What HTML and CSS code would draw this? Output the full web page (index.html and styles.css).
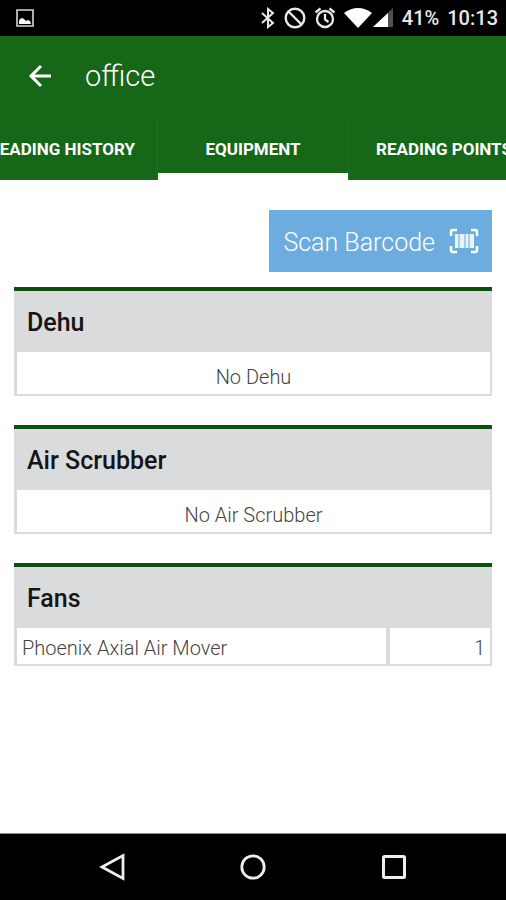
FILE: index.html
```html
<!DOCTYPE html>
<html lang="en">
<head>
<meta charset="utf-8">
<meta name="viewport" content="width=device-width, initial-scale=1">
<title>office</title>
<link rel="stylesheet" href="styles.css">
</head>
<body>
<div class="status">
  <svg class="shot" width="18" height="18" viewBox="0 0 18 18" aria-hidden="true"><path d="M1 1h16v16H1z" fill="none" stroke="#d8d8d8" stroke-width="1.6"/><path d="M3 15v-3l1-2 2-1 2 1 2 2 2-1 2 1 1 3z" fill="#fff"/></svg>
  <div class="indicators">
    <svg width="16" height="22" viewBox="0 0 16 22" aria-hidden="true"><path d="M2 6l11 10-5 4V2l5 4L2 16" fill="none" stroke="#e8e8e8" stroke-width="2"/></svg>
    <svg width="22" height="22" viewBox="0 0 22 22" aria-hidden="true"><circle cx="11" cy="11" r="9.300" fill="none" stroke="#e8e8e8" stroke-width="2.400"/><path d="M4.500 4.500l13 13" stroke="#e8e8e8" stroke-width="2.400"/></svg>
    <svg width="22" height="22" viewBox="0 0 22 22" aria-hidden="true"><g fill="none" stroke="#e8e8e8" stroke-width="2.300"><circle cx="11" cy="12" r="8"/><path d="M1.500 5.500l5-4M20.500 5.500l-5-4M11 7v5.500l3.500 2.500"/></g></svg>
    <svg width="28" height="22" viewBox="0 0 28 22" aria-hidden="true"><path d="M0 6Q14-4 28 6L14 21z" fill="#fff"/></svg>
    <svg class="signal" width="21" height="22" viewBox="0 0 21 22" aria-hidden="true"><path d="M0 20L20 1v19z" fill="#505050"/><path d="M0 20L15 6v14z" fill="#fff"/></svg>
    <span class="battery">41%</span>
    <span>10:13</span>
  </div>
</div>
<header class="appbar">
  <div class="titlebar">
    <button class="back" type="button" aria-label="Back"><svg width="24" height="24" viewBox="0 0 24 24"><path d="M23 12H3M13 2L3 12l10 10" fill="none" stroke="#fff" stroke-width="3"/></svg></button>
    <h1>office</h1>
  </div>
  <nav class="tabs">
    <a href="#history">READING HISTORY</a>
    <a href="#equipment" class="active" aria-current="page">EQUIPMENT</a>
    <a href="#points">READING POINTS</a>
  </nav>
</header>
<main id="equipment">
  <button class="scan" type="button"><span>Scan Barcode</span>
    <svg width="30" height="26" viewBox="0 0 30 26" aria-hidden="true"><path d="M8 2H4Q2 2 2 4v4M22 2h4q2 0 2 2v4M8 24H4q-2 0-2-2v-4M22 24h4q2 0 2-2v-4" fill="none" stroke="#fff" stroke-width="2.500"/><path d="M6 6h3v14H6zM11 6h4v14h-4zM17 6h2v14h-2zM21 6h4v14h-4z" fill="#fff" opacity=".85"/><path d="M9 6h2v14H9zM15 6h2v14h-2zM19 6h2v14h-2z" fill="#fff" opacity=".4"/></svg>
  </button>
  <section>
    <table>
      <thead><tr><th>Dehu</th></tr></thead>
      <tbody><tr><td class="empty">No Dehu</td></tr></tbody>
    </table>
  </section>
  <section>
    <table>
      <thead><tr><th>Air Scrubber</th></tr></thead>
      <tbody><tr><td class="empty">No Air Scrubber</td></tr></tbody>
    </table>
  </section>
  <section>
    <table>
      <thead><tr><th colspan="2">Fans</th></tr></thead>
      <tbody><tr><td>Phoenix Axial Air Mover</td><td class="count">1</td></tr></tbody>
    </table>
  </section>
</main>
<div class="navbar">
  <button type="button" aria-label="Back"><svg width="28" height="28" viewBox="0 0 28 28"><path d="M25 2.500v23L4 14z" fill="none" stroke="#eee" stroke-width="2.800"/></svg></button>
  <button type="button" aria-label="Home"><svg width="28" height="28" viewBox="0 0 28 28"><circle cx="14" cy="14" r="11.200" fill="none" stroke="#eee" stroke-width="2.800"/></svg></button>
  <button type="button" aria-label="Recent apps"><svg width="28" height="28" viewBox="0 0 28 28"><rect x="3.500" y="3.500" width="21" height="21" rx="1" fill="none" stroke="#eee" stroke-width="3"/></svg></button>
</div>
</body>
</html>
```
FILE: styles.css
```css
* {
  box-sizing: border-box;
}

body {
  margin: 0;
  min-height: 100vh;
  display: flex;
  flex-direction: column;
  background: #fff;
  color: #444;
  font-family: Roboto, "Liberation Sans", sans-serif;
}

button {
  border: 0;
  padding: 0;
  background: none;
  font: inherit;
}

svg {
  display: block;
  flex: none;
}

.status {
  height: 36px;
  padding: 0 8px 0 16px;
  display: flex;
  align-items: center;
  justify-content: space-between;
  background: #000;
  color: #e8e8e8;
  font-size: 20px;
  font-weight: 500;
}

.indicators {
  display: flex;
  align-items: center;
  gap: 8px;
}

.indicators .signal {
  margin-left: -7px;
}

.appbar {
  background: #166818;
  color: #fff;
}

.titlebar {
  height: 82px;
  padding: 0 28px 3px;
  display: flex;
  align-items: center;
  gap: 33px;
}

h1 {
  margin: 0;
  font-size: 29px;
  font-weight: 300;
}

.tabs {
  display: flex;
  justify-content: center;
  gap: 1px;
  overflow: hidden;
}

.tabs a {
  flex: 0 0 190px;
  height: 62px;
  border-bottom: 0 solid #fff;
  color: #fff;
  font-size: 17px;
  font-weight: 700;
  line-height: 62px;
  text-align: center;
  text-decoration: none;
  white-space: nowrap;
}

.tabs .active {
  border-bottom-width: 7px;
  box-shadow: -1px 0 #1f6f20, 1px 0 #1f6f20;
}

main {
  flex: 1;
  padding: 30px 14px;
  display: flex;
  flex-direction: column;
}

.scan {
  align-self: flex-end;
  height: 62px;
  margin-bottom: 15px;
  padding: 0 13px 0 14px;
  display: flex;
  align-items: center;
  gap: 14px;
  background: #6cacde;
  color: #fff;
  font-size: 25px;
  font-weight: 300;
}

.scan span {
  padding-top: 3px;
}

section {
  margin-bottom: 29px;
  border-top: 4px solid #0b500e;
}

table {
  width: 100%;
  border: solid #d9dbdc;
  border-width: 0 2px 2px 3px;
  border-spacing: 0;
}

thead {
  background: #d9dbdc;
}

th {
  height: 61px;
  padding: 2px 10px 0;
  color: #151515;
  font-size: 25px;
  font-weight: 500;
  text-align: left;
}

td {
  height: 36px;
  padding: 3px 5px 0;
  font-size: 20px;
  font-weight: 300;
}

.empty {
  height: 42px;
  padding-top: 8px;
  text-align: center;
}

.count {
  width: 104px;
  border-left: 4px solid #d9dbdc;
  text-align: right;
}

.navbar {
  height: 67px;
  padding: 0 42px;
  display: flex;
  align-items: center;
  border-top: 1px solid #888;
  background: #000;
}

.navbar button {
  flex: 1;
  display: flex;
  justify-content: center;
}
```
